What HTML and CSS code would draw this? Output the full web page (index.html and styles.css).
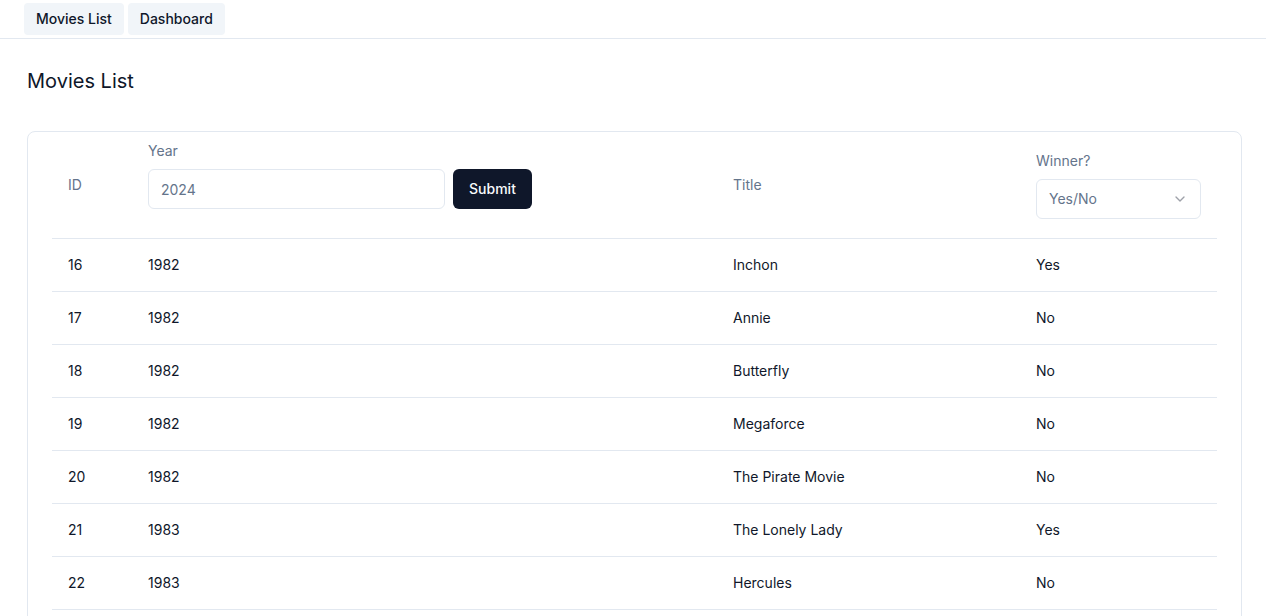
FILE: index.html
```html
<!DOCTYPE html>
<html lang="en">
<head>
<meta charset="utf-8">
<title>Movies List</title>
<link rel="stylesheet" href="styles.css">
</head>
<body>
<nav class="nav">
  <a class="nav-btn" href="#">Movies List</a>
  <a class="nav-btn" href="#">Dashboard</a>
</nav>
<main class="main">
  <h1 class="page-title">Movies List</h1>
  <section class="card">
    <table class="table">
      <colgroup>
        <col class="c-id"><col class="c-year"><col class="c-title"><col class="c-win">
      </colgroup>
      <thead>
        <tr class="head-row">
          <th class="th th-text">ID</th>
          <th class="th th-year">
            <form class="year-form">
              <label class="field-label">Year</label>
              <div class="year-controls">
                <input class="input" type="text" placeholder="2024">
                <button class="btn-primary" type="button">Submit</button>
              </div>
              <div class="form-msg"></div>
            </form>
          </th>
          <th class="th th-text">Title</th>
          <th class="th">
            <div class="win-field">
              <label class="field-label">Winner?</label>
              <div class="select">
                <span>Yes/No</span>
                <svg class="chev" width="16" height="16" viewBox="0 0 24 24" fill="none" stroke="currentColor" stroke-width="2" stroke-linecap="round" stroke-linejoin="round"><path d="m6 9 6 6 6-6"/></svg>
              </div>
            </div>
          </th>
        </tr>
      </thead>
      <tbody>
        <tr class="row"><td>16</td><td>1982</td><td>Inchon</td><td>Yes</td></tr>
        <tr class="row"><td>17</td><td>1982</td><td>Annie</td><td>No</td></tr>
        <tr class="row"><td>18</td><td>1982</td><td>Butterfly</td><td>No</td></tr>
        <tr class="row"><td>19</td><td>1982</td><td>Megaforce</td><td>No</td></tr>
        <tr class="row"><td>20</td><td>1982</td><td>The Pirate Movie</td><td>No</td></tr>
        <tr class="row"><td>21</td><td>1983</td><td>The Lonely Lady</td><td>Yes</td></tr>
        <tr class="row"><td>22</td><td>1983</td><td>Hercules</td><td>No</td></tr>
      </tbody>
    </table>
  </section>
</main>
</body>
</html>
```
FILE: styles.css
```css
* { box-sizing: border-box; }
html, body { margin: 0; padding: 0; }
body {
  font-family: Inter, "Noto Sans", sans-serif;
  color: #0f172a;
  background: #fff;
  font-size: 14px;
}
.nav {
  display: flex;
  gap: 4px;
  padding: 3px 24px 3px;
  border-bottom: 1px solid #e2e8f0;
}
.nav-btn {
  display: inline-flex;
  align-items: center;
  height: 32px;
  padding: 0 12px 1px;
  background: #f1f5f9;
  border-radius: 4px;
  color: #0f172a;
  font-size: 14px;
  font-weight: 500;
  text-decoration: none;
}
.main {
  padding: 0 24px 0 27px;
}
.page-title {
  margin: 27px 0 35px;
  font-size: 20px;
  line-height: 30px;
  font-weight: 400;
}
.card {
  border: 1px solid #e2e8f0;
  border-radius: 8px;
  padding: 0 24px;
  height: 600px;
}
.table {
  width: 100%;
  border-collapse: collapse;
  font-size: 14px;
}
.c-id { width: 80px; }
.c-year { width: 585px; }
.c-title { width: 303px; }
.th {
  text-align: left;
  vertical-align: middle;
  font-weight: 400;
  color: #64748b;
  padding: 9px 16px;
}
.th-text { padding-bottom: 11px; }
.head-row { border-bottom: 1px solid #e2e8f0; }
.year-form { display: flex; flex-direction: column; }
.field-label {
  display: block;
  line-height: 20px;
  font-size: 14px;
  color: #64748b;
  margin-bottom: 8px;
}
.year-controls { display: flex; gap: 8px; }
.input {
  width: 297px;
  height: 40px;
  border: 1px solid #e2e8f0;
  border-radius: 6px;
  padding: 0 12px;
  font: inherit;
  font-size: 14px;
  color: #0f172a;
  outline: none;
}
.input::placeholder { color: #64748b; }
.btn-primary {
  height: 40px;
  width: 79px;
  border: 0;
  border-radius: 6px;
  background: #0f172a;
  color: #f8fafc;
  font: inherit;
  font-size: 14px;
  font-weight: 500;
  padding: 0 0 2px;
}
.form-msg { height: 20px; }
.win-field { display: flex; flex-direction: column; }
.select {
  width: 165px;
  height: 40px;
  border: 1px solid #e2e8f0;
  border-radius: 6px;
  padding: 0 12px 1px;
  display: flex;
  align-items: center;
  justify-content: space-between;
  color: #64748b;
}
.chev { color: #0f172a; opacity: 0.4; width: 16px; height: 16px; }
.row { border-bottom: 1px solid #e2e8f0; }
.row td {
  height: 53px;
  padding: 0 16px 2px;
  vertical-align: middle;
  color: #0f172a;
}
```
